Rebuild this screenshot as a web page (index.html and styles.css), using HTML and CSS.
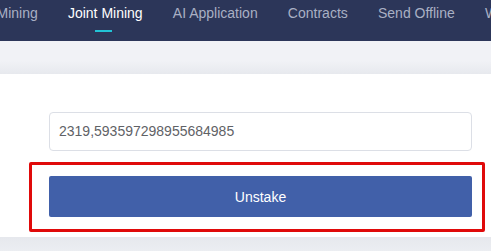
FILE: index.html
```html
<!DOCTYPE html>
<html lang="en">
<head>
<meta charset="utf-8">
<title>Unstake</title>
<link rel="stylesheet" href="styles.css">
</head>
<body>
<header class="topnav">
  <nav class="nav-list">
    <a class="nav-item">Mining</a>
    <a class="nav-item active">Joint Mining</a>
    <a class="nav-item">AI Application</a>
    <a class="nav-item">Contracts</a>
    <a class="nav-item">Send Offline</a>
    <a class="nav-item">Wallet</a>
  </nav>
</header>
<div class="band"></div>
<main class="card">
  <div class="field">2319,593597298955684985</div>
  <button class="btn-primary">Unstake</button>
  <div class="highlight"></div>
</main>
<div class="footer-band"></div>
</body>
</html>
```
FILE: styles.css
```css
html, body {
  margin: 0;
  padding: 0;
  background: #eef0f4;
  font-family: "Liberation Sans", Arial, sans-serif;
  overflow: hidden;
}

.topnav {
  height: 41px;
  background: #2c3659;
  overflow: hidden;
}

.nav-list {
  display: flex;
  gap: 30.2px;
  margin-left: -3.5px;
  white-space: nowrap;
}

.nav-item {
  position: relative;
  display: block;
  font-size: 14px;
  line-height: 26px;
  color: #a9b0c4;
  text-decoration: none;
}

.nav-item.active {
  color: #ffffff;
}

.nav-item.active::after {
  content: "";
  position: absolute;
  left: 27px;
  top: 30px;
  width: 17px;
  height: 2px;
  background: #22c3d6;
}

.band {
  height: 33px;
  background: linear-gradient(to bottom, #f1f2f6 0%, #f1f2f6 60%, #e7e9ee 100%);
}

.card {
  position: relative;
  background: #ffffff;
  padding: 38px 19px 20px 49px;
  display: flex;
  flex-direction: column;
  gap: 25px;
}

.field {
  width: 423px;
  height: 39px;
  box-sizing: border-box;
  border: 1px solid #dcdfe6;
  border-radius: 4px;
  padding: 0 9px;
  font-size: 14px;
  line-height: 37px;
  color: #5f6266;
}

.btn-primary {
  width: 423px;
  height: 41px;
  border: none;
  border-radius: 2px;
  background: #4160a9;
  color: #ffffff;
  font-family: "Liberation Sans", Arial, sans-serif;
  font-size: 14px;
  padding: 0;
}

.highlight {
  position: absolute;
  left: 29px;
  top: 88px;
  width: 456px;
  height: 70px;
  box-sizing: border-box;
  border: 3px solid #e00a0a;
  border-radius: 2px;
}

.footer-band {
  height: 20px;
  background: linear-gradient(to bottom, #e6e8ed 0%, #eef0f4 100%);
}
```
